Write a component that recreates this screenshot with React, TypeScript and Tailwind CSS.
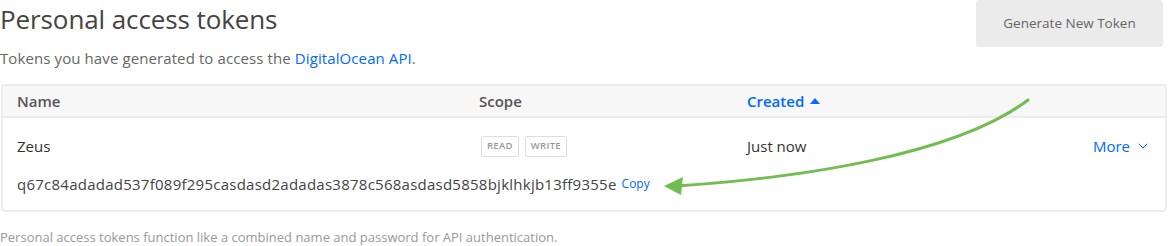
import { ChevronDown } from "lucide-react";

const token =
  "q67c84adadad537f089f295casdasd2adadas3878c568asdasd5858bjklhkjb13ff9355e";

export default function App() {
  return (
    <div className="relative h-[246px] w-[1168px] overflow-hidden bg-white font-['Open_Sans',sans-serif] text-[#333]">
      <div className="flex items-start justify-between pr-[5px]">
        <div className="flex flex-col">
          <h1 className="mt-[3px] text-[26px] leading-[32px] font-normal tracking-[-0.1px] text-[#444]">
            Personal access tokens
          </h1>
          <p className="mt-[13px] text-[15px] leading-[20px] tracking-[0.1px] text-[#666]">
            Tokens you have generated to access the{" "}
            <a className="text-[#0069ff]">DigitalOcean API</a>.
          </p>
        </div>
        <button className="h-[47px] w-[187px] rounded-[3px] bg-[#ebebeb] text-[13.5px] font-medium text-[#666]">
          Generate New Token
        </button>
      </div>

      <div className="mx-[1px] mt-[16px] w-[1166px] overflow-hidden rounded-[4px] border-2 border-[#ececec]">
        <div className="grid h-[32px] grid-cols-[462px_268px_1fr] items-center border-b-2 border-[#ececec] bg-[#f7f7f7] pl-[14px] text-[15px] font-semibold text-[#555]">
          <span>Name</span>
          <span>Scope</span>
          <span className="flex items-center gap-[6px] text-[#0069ff]">
            Created
            <svg width="10" height="6" viewBox="0 0 10 6">
              <path d="M0 6 L5 0 L10 6 Z" fill="#0069ff" />
            </svg>
          </span>
        </div>
        <div className="px-[14px] pt-[17px] pb-[16px]">
          <div className="grid h-[22px] grid-cols-[462px_268px_1fr] items-center text-[15px]">
            <span>Zeus</span>
            <span className="flex gap-[6px] pl-[2px]">
              <Badge>Read</Badge>
              <Badge>Write</Badge>
            </span>
            <span className="flex items-center justify-between">
              <span>Just now</span>
              <span className="flex items-center gap-[5px] text-[#0069ff]">
                More
                <ChevronDown size={16} strokeWidth={1.5} />
              </span>
            </span>
          </div>
          <div className="mt-[17px] flex h-[20px] items-center gap-[5px]">
            <span className="text-[15px] tracking-[0.25px] text-[#444]">{token}</span>
            <a className="text-[12px] text-[#0069ff]">Copy</a>
          </div>
        </div>
      </div>

      <p className="mt-[15px] text-[13px] leading-[20px] text-[#999]">
        Personal access tokens function like a combined name and password for API authentication.
      </p>

      <svg
        className="absolute top-0 left-0"
        width="1168"
        height="246"
        viewBox="0 0 1168 246"
      >
        <path
          d="M1028 100 C955 155, 800 178, 676 186"
          fill="none"
          stroke="#72bd4f"
          strokeWidth="3"
          strokeLinecap="round"
        />
        <path d="M664 186 L683 177 L681 195 Z" fill="#72bd4f" />
      </svg>
    </div>
  );
}

function Badge({ children }: { children: React.ReactNode }) {
  return (
    <span className="flex h-[21px] items-center rounded-[2px] border border-[#ddd] px-[5px] text-[9.5px] font-semibold uppercase tracking-[0.3px] text-[#999]">
      {children}
    </span>
  );
}
